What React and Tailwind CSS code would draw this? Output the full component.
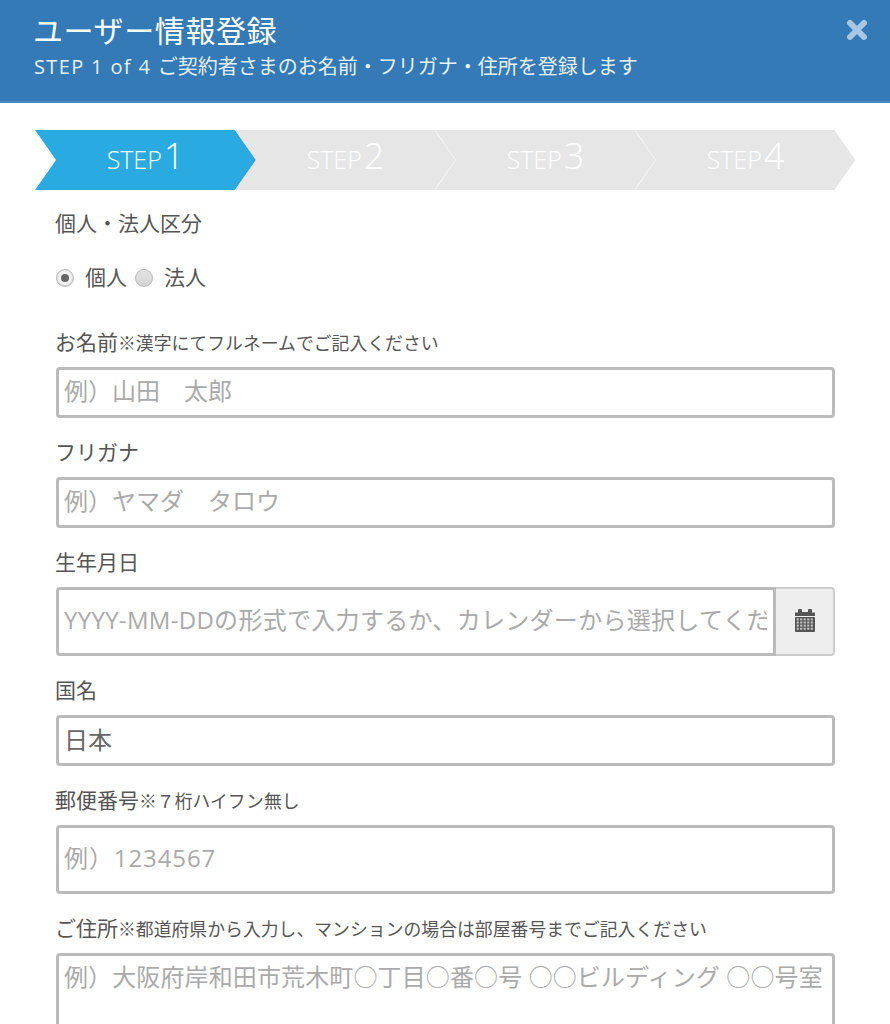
import React from "react";

const FONT = "font-['Open_Sans','Noto_Sans_CJK_JP',sans-serif]";

function Step({ n, active }) {
  return (
    <div className="relative h-[60px] w-[221px] -mr-[21px] shrink-0 flex items-center justify-center">
      <svg className="absolute inset-0" width="221" height="60" viewBox="0 0 221 60">
        <polygon points="0,0 200,0 221,30 200,60 0,60 21,30" fill={active ? "#29abe2" : "#e6e6e6"} />
        {!active && <polyline points="200,0 221,30 200,60" fill="none" stroke="#ffffff" strokeWidth="1.2" />}
      </svg>
      <span className="relative text-white flex items-baseline leading-none font-light -mt-[8px]">
        <span className="text-[25px]">STEP</span>
        <span className="text-[36px] ml-[2px]">{n}</span>
      </span>
    </div>
  );
}

function Label({ children, hint }) {
  return (
    <div className="h-[30px] flex items-baseline text-[21px] leading-[28px] text-[#555] -ml-px">
      {children}
      {hint && <span className="text-[17.85px]">{hint}</span>}
    </div>
  );
}

const inputCls =
  "block w-full bg-white border-[3px] border-[#bbb] rounded-[4px] pl-[5px] pr-[6px] pb-[5px] text-[24px] text-[#666] outline-none placeholder:text-[#aaa]";

function Radio({ checked }) {
  return (
    <span className="w-[18px] h-[18px] rounded-full border border-[#bbb] bg-gradient-to-b from-[#e4e4e4] to-[#d4d4d4] flex items-center justify-center">
      {checked && (
        <span className="w-[14px] h-[14px] rounded-full bg-[#f2f2f2] flex items-center justify-center">
          <span className="w-[8px] h-[8px] rounded-full bg-[#666]" />
        </span>
      )}
    </span>
  );
}

function CalendarIcon() {
  const holes = [];
  for (let r = 0; r < 4; r++) {
    for (let c = 0; c < 5; c++) {
      holes.push(<rect key={`${r}-${c}`} x={1.7 + c * 3.5} y={9.4 + r * 3.1} width="2.1" height="2" fill="#c9c9c9" />);
    }
  }
  return (
    <svg width="20" height="23" viewBox="0 0 20 23" className="mb-[2px]">
      <path d="M0 3.5 H3 V1 a1 1 0 0 1 1-1 H6 a1 1 0 0 1 1 1 V3 H13 V1 a1 1 0 0 1 1-1 H16 a1 1 0 0 1 1 1 V3.5 H20 V7 H0 Z" fill="#555" />
      <rect x="0" y="8" width="20" height="15" rx="1" fill="#555" />
      {holes}
    </svg>
  );
}

export default function App() {
  return (
    <div className={`h-screen overflow-hidden bg-white ${FONT}`}>
      <header className="h-[103px] bg-[#337ab7] border-b-2 border-[#4a8ac2] relative pl-[34px] pt-[11px] text-white">
        <h1 className="text-[30px] leading-[40px] tracking-[0.6px] -ml-px">ユーザー情報登録</h1>
        <p className="text-[20px] leading-[26px] mt-[3px] text-[#e8f0f8]">
          <span className="tracking-[1.35px]">STEP 1 of 4 </span>ご契約者さまのお名前・フリガナ・住所を登録します
        </p>
        <svg className="absolute right-[22px] top-[19px]" width="22" height="22" viewBox="0 0 22 22">
          <path d="M4 4 L18 18 M18 4 L4 18" stroke="#a9c7e2" strokeWidth="6" strokeLinecap="round" />
        </svg>
      </header>
      <div className="pl-[35px] pt-[27px] flex">
        <Step n={1} active />
        <Step n={2} />
        <Step n={3} />
        <Step n={4} />
      </div>
      <div className="pl-[56px] w-[835px]">
        <div className="mt-[19px]"><Label>個人・法人区分</Label></div>
        <div className="mt-[24px] h-[30px] flex items-center text-[21px] text-[#555]">
          <Radio checked />
          <span className="ml-[11px]">個人</span>
          <span className="ml-[8px]"><Radio /></span>
          <span className="ml-[11px]">法人</span>
        </div>
        <div className="mt-[35px]"><Label hint="※漢字にてフルネームでご記入ください">お名前</Label></div>
        <input className={`${inputCls} h-[51px] mt-[9px]`} placeholder="例）山田　太郎" readOnly />
        <div className="mt-[20px]"><Label>フリガナ</Label></div>
        <input className={`${inputCls} h-[51px] mt-[9px]`} placeholder="例）ヤマダ　タロウ" readOnly />
        <div className="mt-[20px]"><Label>生年月日</Label></div>
        <div className="flex mt-[9px] h-[69px]">
          <input className={`${inputCls} flex-1 min-w-0 h-full rounded-r-none tracking-[0.3px]`} placeholder="YYYY-MM-DDの形式で入力するか、カレンダーから選択してください" readOnly />
          <div className="w-[59px] h-full bg-[#eee] border-2 border-l-0 border-[#ccc] rounded-r-[4px] flex items-center justify-center">
            <CalendarIcon />
          </div>
        </div>
        <div className="mt-[20px]"><Label>国名</Label></div>
        <input className={`${inputCls} h-[51px] mt-[9px]`} defaultValue="日本" readOnly />
        <div className="mt-[20px]"><Label hint="※７桁ハイフン無し">郵便番号</Label></div>
        <input className={`${inputCls} h-[69px] mt-[9px] tracking-[0.9px]`} placeholder="例）1234567" readOnly />
        <div className="mt-[20px]"><Label hint="※都道府県から入力し、マンションの場合は部屋番号までご記入ください">ご住所</Label></div>
        <textarea className={`${inputCls} h-[120px] mt-[9px] pt-[3px] resize-none tracking-[0.12px]`} placeholder="例）大阪府岸和田市荒木町○丁目○番○号 ○○ビルディング ○○号室" readOnly />
      </div>
    </div>
  );
}
